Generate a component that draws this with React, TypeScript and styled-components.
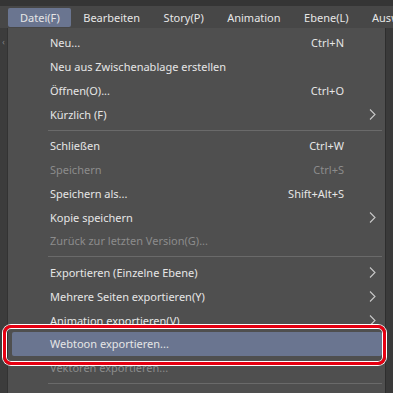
import React from 'react';
import styled, { createGlobalStyle } from 'styled-components';

const Global = createGlobalStyle`
  html, body { margin: 0; padding: 0; background: #3a3a3a; }
  body { font-family: "Noto Sans", "Open Sans", sans-serif; }
`;

const Page = styled.div`
  width: 393px;
  height: 393px;
  overflow: hidden;
  background: #3a3a3a;
  display: flex;
  flex-direction: column;
`;

const TopStrip = styled.div`
  height: 6px;
  background: #353535;
`;

const MenuBar = styled.div`
  height: 22px;
  background: #474747;
  display: flex;
  align-items: center;
  padding-left: 8px;
  white-space: nowrap;
  overflow: hidden;
`;

const MenuBarItem = styled.div<{ active?: boolean }>`
  flex-shrink: 0;
  height: 19px;
  line-height: 19px;
  padding: 0 11.5px 0 12px;
  font-size: 11px;
  color: #e6e6e6;
  border-radius: 2px;
  background: ${(p) => (p.active ? '#6a7590' : 'transparent')};
`;

const Body = styled.div`
  flex: 1;
  display: flex;
`;

const Gutter = styled.div`
  width: 8px;
  background: #3c3c3c;
  border-right: 1px solid #333;
  box-sizing: border-box;
  display: flex;
  flex-direction: column;
  align-items: center;
  padding-top: 8px;
  color: #888;
  font-size: 8px;
`;

const Dropdown = styled.div`
  position: relative;
  width: 378px;
  background: #4f4f4f;
  border-right: 1px solid #2e2e2e;
  box-sizing: border-box;
  padding-top: 3px;
`;

const Row = styled.div<{ disabled?: boolean; hover?: boolean }>`
  height: 23.75px;
  margin: 0 3px 0 4px;
  display: grid;
  grid-template-columns: 1fr auto 38px;
  align-items: center;
  padding-left: 38px;
  font-size: 11px;
  color: ${(p) => (p.disabled ? '#8c8c8c' : '#e6e6e6')};
  background: ${(p) => (p.hover ? '#6a7590' : 'transparent')};
  border-radius: 2px;
  white-space: nowrap;
`;

const Shortcut = styled.span`
  text-align: right;
`;

const Arrow = styled.span`
  display: flex;
  justify-content: center;
  padding-left: 18px;
`;

const Separator = styled.div`
  height: 8px;
  display: flex;
  align-items: center;
  padding: 0 3px 0 40px;
  &::after {
    content: '';
    flex: 1;
    height: 1px;
    background: #6a6a6a;
  }
`;

const RightFill = styled.div`
  flex: 1;
  background: #3a3a3a;
`;

const Annotation = styled.div`
  position: absolute;
  left: -5px;
  top: 297px;
  width: 383px;
  height: 40px;
  box-sizing: border-box;
  border: 3px solid #e60012;
  border-radius: 8px;
  box-shadow: 0 0 0 1px #ffffff, inset 0 0 0 1px #ffffff;
  pointer-events: none;
`;

const Chevron = () => (
  <svg width="7" height="11" viewBox="0 0 7 11">
    <path d="M1 0.5 L6 5.5 L1 10.5" fill="none" stroke="#c8c8c8" strokeWidth="1.1" />
  </svg>
);

type Item =
  | { sep: true }
  | { label: string; shortcut?: string; sub?: boolean; disabled?: boolean; hover?: boolean };

const items: Item[] = [
  { label: 'Neu...', shortcut: 'Ctrl+N' },
  { label: 'Neu aus Zwischenablage erstellen' },
  { label: 'Öffnen(O)...', shortcut: 'Ctrl+O' },
  { label: 'Kürzlich  (F)', sub: true },
  { sep: true },
  { label: 'Schließen', shortcut: 'Ctrl+W' },
  { label: 'Speichern', shortcut: 'Ctrl+S', disabled: true },
  { label: 'Speichern als...', shortcut: 'Shift+Alt+S' },
  { label: 'Kopie speichern', sub: true },
  { label: 'Zurück zur letzten Version(G)...', disabled: true },
  { sep: true },
  { label: 'Exportieren (Einzelne Ebene)', sub: true },
  { label: 'Mehrere Seiten exportieren(Y)', sub: true },
  { label: 'Animation exportieren(V)', sub: true },
  { label: 'Webtoon exportieren...', hover: true },
  { label: 'Vektoren exportieren...', disabled: true },
  { sep: true },
];

const menus = ['Datei(F)', 'Bearbeiten', 'Story(P)', 'Animation', 'Ebene(L)', 'Auswahlbereich(S)'];

export default function App() {
  return (
    <Page>
      <Global />
      <TopStrip />
      <MenuBar>
        {menus.map((m, i) => (
          <MenuBarItem key={m} active={i === 0}>
            {m}
          </MenuBarItem>
        ))}
      </MenuBar>
      <Body>
        <Gutter>‹</Gutter>
        <Dropdown>
          {items.map((it, i) =>
            'sep' in it ? (
              <Separator key={i} />
            ) : (
              <Row key={i} disabled={it.disabled} hover={it.hover}>
                <span>{it.label}</span>
                <Shortcut>{it.shortcut}</Shortcut>
                <Arrow>{it.sub ? <Chevron /> : null}</Arrow>
              </Row>
            )
          )}
          <Annotation />
        </Dropdown>
        <RightFill />
      </Body>
    </Page>
  );
}
